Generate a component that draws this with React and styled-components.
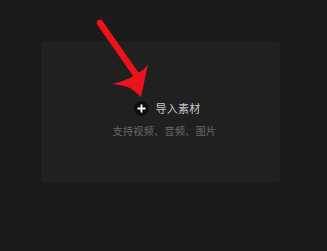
import React from 'react'
import styled, { createGlobalStyle } from 'styled-components'

const GlobalStyle = createGlobalStyle`
    html, body {
        margin: 0;
        padding: 0;
        background: #1b1b1b;
        font-family: "Noto Sans CJK SC", "Noto Sans", sans-serif;
    }
`

const Page = styled.div`
    position: relative;
    width: 327px;
    height: 251px;
    padding: 41px 0 0 41px;
    box-sizing: border-box;
`

const DropZone = styled.div`
    width: 239px;
    height: 142px;
    background: #202020;
    border-radius: 4px;
    box-shadow: 0 0 2px rgba(0, 0, 0, 0.2);
    display: flex;
    flex-direction: column;
    align-items: center;
    padding-top: 59px;
    box-sizing: border-box;
    padding-left: 8px;
`

const ImportRow = styled.div`
    display: flex;
    align-items: center;
    gap: 6px;
    margin-left: 6px;
    color: #c8c8c8;
    font-size: 11px;
    line-height: 16px;
    letter-spacing: 0.3px;
`

const PlusBadge = styled.span`
    width: 15px;
    height: 15px;
    border-radius: 50%;
    background: #0e0e0e;
    display: flex;
    align-items: center;
    justify-content: center;
`

const Hint = styled.div`
    margin-top: 8px;
    color: #6a6a6a;
    font-size: 10px;
    line-height: 14px;
    letter-spacing: 0.4px;
`

const Arrow = styled.svg`
    position: absolute;
    left: 90px;
    top: 15px;
    width: 65px;
    height: 90px;
    pointer-events: none;
`

export default function App() {
    return (
        <>
            <GlobalStyle />
            <Page>
                <DropZone>
                    <ImportRow>
                        <PlusBadge>
                            <svg width="9" height="9" viewBox="0 0 9 9">
                                <path d="M4.5 0.5v8M0.5 4.5h8" stroke="#fff" strokeWidth="1.8" />
                            </svg>
                        </PlusBadge>
                        导入素材
                    </ImportRow>
                    <Hint>支持视频、音频、图片</Hint>
                </DropZone>
                <Arrow viewBox="0 0 65 90">
                    <path d="M10 8 L47 61" stroke="#f0121a" strokeWidth="6.5" strokeLinecap="round" />
                    <path
                        d="M51 82 L58 49 Q54 56 47 58 L45 60 Q36 66 22 69 Q33 70 40 73 Q46 77 51 82 Z"
                        fill="#f0121a"
                    />
                </Arrow>
            </Page>
        </>
    )
}
